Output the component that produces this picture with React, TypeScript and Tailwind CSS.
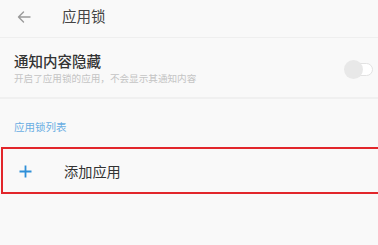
import React from "react";

export default function App() {
  const font = { fontFamily: '"Noto Sans CJK SC", "Noto Sans", sans-serif' };
  return (
    <div className="w-[378px] h-[245px] overflow-hidden bg-[#f9f9f9] text-[#333]" style={font}>
      <div className="h-[38px] flex items-center border-b border-[#efefef] pb-[4px]">
        <svg className="ml-[17px]" width="14" height="12" viewBox="0 0 14 12" fill="none" stroke="#9a9a9a" strokeWidth="1.4" strokeLinecap="round" strokeLinejoin="round">
          <path d="M13 6H1.5M6.5 1L1.5 6l5 5" />
        </svg>
        <span className="ml-[31px] text-[14.5px] text-[#444] leading-none">应用锁</span>
      </div>
      <div className="h-[61px] flex items-center justify-between border-b-2 border-[#f0f0f0] pl-[14px] pr-[5px]">
        <div className="flex flex-col">
          <span className="text-[14.5px] font-medium leading-none text-[#333] mt-[3px]">通知内容隐藏</span>
          <span className="text-[9.6px] leading-none text-[#c4c4c4] mt-[6px]">开启了应用锁的应用，不会显示其通知内容</span>
        </div>
        <div className="relative w-[29px] h-[19px] flex items-center mt-[4px]">
          <div className="absolute left-[6px] right-0 h-[13px] rounded-full border border-[#e2e2e2] bg-white" />
          <div className="absolute left-0 w-[19px] h-[19px] rounded-full bg-[#e8e8e8]" />
        </div>
      </div>
      <div className="h-[48px] flex items-center pl-[14px] pt-[8px]">
        <span className="text-[10.5px] leading-none text-[#6aaee3]">应用锁列表</span>
      </div>
      <div className="ml-[1px] w-[390px] h-[47px] border-2 border-[#e2262b] flex items-center pt-[2px]">
        <svg className="ml-[16px]" width="13" height="13" viewBox="0 0 13 13" stroke="#2f8fd8" strokeWidth="1.8">
          <path d="M6.5 0.5v12M0.5 6.5h12" />
        </svg>
        <span className="ml-[32px] text-[14.2px] leading-none text-[#333]">添加应用</span>
      </div>
    </div>
  );
}
